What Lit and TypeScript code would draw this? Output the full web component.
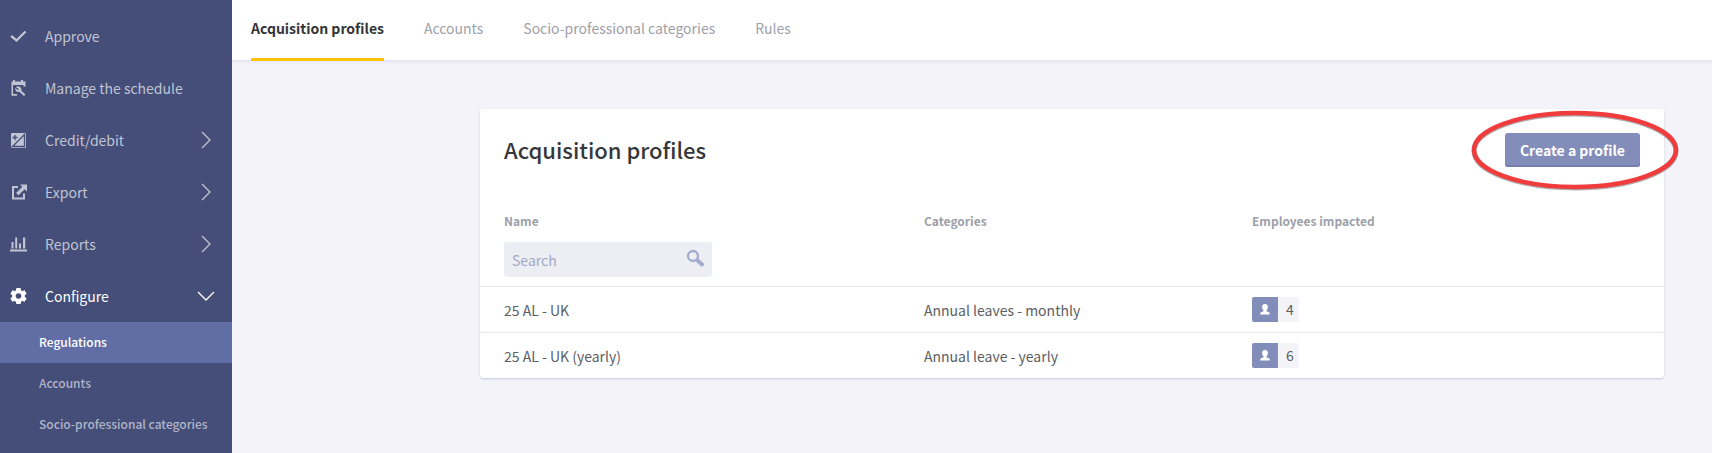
import { LitElement, html, css, svg } from "lit";
import { customElement, state } from "lit/decorators.js";
import { classMap } from "lit/directives/class-map.js";

interface NavEntry {
  label: string;
  icon: string;
  arrow?: "right" | "down";
}

interface Profile {
  name: string;
  category: string;
  employees: number;
}

const NAV: NavEntry[] = [
  { label: "Approve", icon: "check" },
  { label: "Manage the schedule", icon: "schedule" },
  { label: "Credit/debit", icon: "credit", arrow: "right" },
  { label: "Export", icon: "export", arrow: "right" },
  { label: "Reports", icon: "reports", arrow: "right" },
  { label: "Configure", icon: "gear", arrow: "down" },
];

const SUB_NAV = ["Regulations", "Accounts", "Socio-professional categories"];
const TABS = ["Acquisition profiles", "Accounts", "Socio-professional categories", "Rules"];

const PROFILES: Profile[] = [
  { name: "25 AL - UK", category: "Annual leaves - monthly", employees: 4 },
  { name: "25 AL - UK (yearly)", category: "Annual leave - yearly", employees: 6 },
];

const ICONS: Record<string, unknown> = {
  check: svg`<path d="M1.200 8L6.500 12.500L15.500 3.500" fill="none" stroke="currentColor" stroke-width="2.300"/>`,
  schedule: svg`
    <path fill="currentColor" d="M3 0h2v1.500h6V0h2v1.500h2.500V6.500h-2V5H3V14h4v1.700H1.500V1.500H3z"/>
    <path fill="currentColor" d="M5.800 7.200a3.300 3.300 0 0 1 5.400 3.400l4.300 3.900-1.600 1.600-4.200-4.200a3.300 3.300 0 0 1-4.300-3.900l2.200 2 1.300-1.200z"/>`,
  credit: svg`
    <rect x="1" y="1" width="15" height="15" rx="1" fill="currentColor"/>
    <path class="cut" d="M2.500 5.500h5M5 3v5M2.500 14.500L14.500 2.500V14.500z"/>
    <path d="M8 12.700h5" fill="none" stroke="currentColor"/>`,
  export: svg`
    <path d="M8 3H3V14.500H14V9.500" fill="none" stroke="currentColor" stroke-width="2"/>
    <path d="M10 0.500H17V7.500L14.700 5.200L8.500 11.300L6 9L12.300 2.800z" fill="currentColor"/>`,
  reports: svg`<path fill="currentColor" d="M0 13.500h17v2H0zM1.500 6h2v6.500h-2zM5.200 1.500h2v11h-2zM9 7.500h2v5h-2zM13 1.500h2.200v11h-2.200z"/>`,
  gear: svg`<path fill="currentColor" fill-rule="evenodd" d="M6.400 0h4.200l.5 2.400 1.300.7 2.200-.8 2 3.400-1.800 1.600v1.500l1.800 1.600-2 3.400-2.200-.8-1.300.7-.5 2.400H6.400l-.5-2.400-1.300-.7-2.200.8-2-3.400 1.800-1.600V7.300L.4 5.700l2-3.400 2.200.8 1.300-.7zM8.500 5.200a2.800 2.800 0 1 0 0 5.600 2.800 2.800 0 0 0 0-5.600z"/>`,
};

@customElement("app-root")
export class AppRoot extends LitElement {
  @state() private query = "";

  static styles = css`
    :host {
      display: flex;
      min-height: 100vh;
      background: #f3f3f9;
      color: #5c5e63;
      font-family: "Noto Sans CJK SC", "Open Sans", sans-serif;
      font-size: 14px;
      line-height: 20px;
    }
    * {
      box-sizing: border-box;
    }
    a {
      color: inherit;
      text-decoration: none;
    }
    ul {
      list-style: none;
      margin: 0;
      padding: 0;
    }
    .sidebar {
      position: relative;
      z-index: 1;
      flex: none;
      width: 232px;
      padding-top: 10px;
      background: #444e79;
      color: #c1c4d3;
    }
    .nav-link {
      display: flex;
      align-items: center;
      height: 52px;
      padding: 0 17px 0 10px;
    }
    .nav-link.open {
      color: #fff;
    }
    .nav-icon {
      flex: none;
      width: 17px;
      height: 16px;
      margin-right: 18px;
    }
    .cut {
      fill: none;
      stroke: #444e79;
      stroke-width: 1.300;
    }
    .nav-label {
      flex: 1;
    }
    .chevron {
      width: 18px;
      height: 18px;
      fill: none;
      stroke: currentColor;
      stroke-width: 1.300;
    }
    .sub-link {
      display: flex;
      align-items: center;
      height: 41px;
      padding: 0 0 1px 39px;
      color: #b0b4c8;
      font-size: 12px;
      font-weight: 500;
    }
    .sub-link.current {
      background: #616ea6;
      color: #fff;
    }
    .page {
      flex: 1;
      min-width: 0;
    }
    .tabs {
      display: flex;
      gap: 40px;
      height: 60px;
      padding: 0 19px;
      background: #fff;
      box-shadow: 0 1px 0 #e2e4f0, 0 2px 3px #e2e4f0;
    }
    .tab {
      height: 61px;
      padding-top: 18px;
      color: #9d9fa9;
    }
    .tab.current {
      color: #333437;
      font-weight: 700;
      border-bottom: 3px solid #fdc300;
    }
    .content {
      padding: 49px 48px 48px 248px;
    }
    .card {
      background: #fff;
      border-radius: 3px;
      box-shadow: 0 1px 2px #c4c8e0;
    }
    .card-head {
      display: flex;
      justify-content: space-between;
      align-items: flex-start;
      padding: 24px 24px 44px;
    }
    .title {
      margin: 0;
      color: #36373b;
      font-size: 22px;
      line-height: 32px;
      font-weight: 500;
    }
    .create-wrap {
      position: relative;
    }
    .create {
      display: block;
      height: 34px;
      padding: 0 15px;
      border: 0;
      border-radius: 3px;
      background: #838db9;
      box-shadow: inset 0 -2px 0 #7680ab;
      color: #fff;
      font: inherit;
      font-weight: 700;
    }
    .highlight {
      position: absolute;
      top: -24px;
      right: -39px;
      width: 208px;
      height: 82px;
      pointer-events: none;
      overflow: visible;
    }
    .grid {
      width: 100%;
      table-layout: fixed;
      border-collapse: separate;
      border-spacing: 0;
    }
    .col-name {
      width: 37.5%;
    }
    .col-category {
      width: 27.7%;
    }
    th,
    td {
      padding: 0;
      text-align: left;
      vertical-align: middle;
    }
    th {
      color: #9d9fa9;
      font-size: 12px;
      font-weight: 700;
    }
    th:first-child,
    td:first-child {
      padding-left: 24px;
    }
    .filters td {
      padding-top: 11px;
      padding-bottom: 9px;
    }
    .row td {
      height: 46px;
      border-top: 1px solid #e7e8f2;
    }
    .search {
      display: flex;
      align-items: center;
      width: 208px;
      height: 35px;
      padding: 0 8px;
      border-radius: 3px;
      background: #edeef4;
    }
    .search-input {
      flex: 1;
      min-width: 0;
      padding: 0;
      border: 0;
      outline: 0;
      background: none;
      color: #5c5e63;
      font: inherit;
    }
    .search-input::placeholder {
      color: #a3a9c8;
      opacity: 1;
    }
    .search-icon {
      width: 18px;
      height: 18px;
      margin-bottom: 3px;
      color: #a1abcd;
    }
    .badge {
      display: flex;
      width: max-content;
      height: 25px;
      border-radius: 2px;
      overflow: hidden;
      background: #f3f3f8;
    }
    .badge-icon {
      display: flex;
      align-items: center;
      justify-content: center;
      width: 26px;
      background: #838db9;
      color: #fff;
    }
    .badge-count {
      padding: 2px 5px 0 8px;
    }
  `;

  private renderNav(item: NavEntry) {
    const open = item.arrow === "down";
    return html`
      <li>
        <a class=${classMap({ "nav-link": true, open })} href="#">
          <svg class="nav-icon" viewBox="0 0 17 16" aria-hidden="true">${ICONS[item.icon]}</svg>
          <span class="nav-label">${item.label}</span>
          ${item.arrow
            ? html`<svg class="chevron" viewBox="0 0 18 18" aria-hidden="true">
                <path d=${open ? "M1 5L9 13L17 5" : "M5 1L13 9L5 17"} />
              </svg>`
            : null}
        </a>
        ${open
          ? html`<ul>
              ${SUB_NAV.map(
                (label, i) => html`<li>
                  <a class=${classMap({ "sub-link": true, current: i === 0 })} href="#">${label}</a>
                </li>`
              )}
            </ul>`
          : null}
      </li>
    `;
  }

  private renderRow(p: Profile) {
    return html`
      <tr class="row">
        <td>${p.name}</td>
        <td>${p.category}</td>
        <td>
          <span class="badge">
            <span class="badge-icon">
              <svg width="10" height="11" viewBox="0 0 10 11" aria-hidden="true">
                <path
                  fill="currentColor"
                  d="M5 0C6.900 0 7.900 1.300 7.900 3.100C7.900 4.700 7.200 5.700 6.500 6.400V7.200L9 8.200Q9.700 8.500 9.700 9.400V10.400H.3V9.400Q.3 8.500 1 8.200L3.500 7.200V6.400C2.800 5.700 2.100 4.700 2.100 3.100C2.100 1.300 3.100 0 5 0z"
                />
              </svg>
            </span>
            <span class="badge-count">${p.employees}</span>
          </span>
        </td>
      </tr>
    `;
  }

  render() {
    const q = this.query.toLowerCase();
    const rows = PROFILES.filter((p) => p.name.toLowerCase().includes(q));
    return html`
      <nav class="sidebar">
        <ul>
          ${NAV.map((item) => this.renderNav(item))}
        </ul>
      </nav>
      <div class="page">
        <nav class="tabs">
          ${TABS.map(
            (label, i) => html`<a class=${classMap({ tab: true, current: i === 0 })} href="#">${label}</a>`
          )}
        </nav>
        <main class="content">
          <section class="card">
            <header class="card-head">
              <h1 class="title">Acquisition profiles</h1>
              <div class="create-wrap">
                <button class="create" type="button">Create a profile</button>
                <svg class="highlight" viewBox="0 0 208 82" aria-hidden="true">
                  <ellipse cx="104" cy="42" rx="101" ry="37" fill="none" stroke="#77777c" stroke-opacity="0.6" stroke-width="5" />
                  <ellipse cx="104" cy="41" rx="101" ry="37" fill="none" stroke="#f03c3c" stroke-width="4.500" />
                </svg>
              </div>
            </header>
            <table class="grid">
              <colgroup>
                <col class="col-name" />
                <col class="col-category" />
                <col />
              </colgroup>
              <thead>
                <tr>
                  <th scope="col">Name</th>
                  <th scope="col">Categories</th>
                  <th scope="col">Employees impacted</th>
                </tr>
                <tr class="filters">
                  <td>
                    <label class="search">
                      <input
                        class="search-input"
                        type="text"
                        placeholder="Search"
                        aria-label="Search by name"
                        .value=${this.query}
                        @input=${(e: Event) => (this.query = (e.target as HTMLInputElement).value)}
                      />
                      <svg class="search-icon" viewBox="0 0 18 18" aria-hidden="true">
                        <circle cx="7" cy="7" r="5" fill="none" stroke="currentColor" stroke-width="2.300" />
                        <path d="M11 11L16 15.500" stroke="currentColor" stroke-width="3.800" stroke-linecap="round" />
                      </svg>
                    </label>
                  </td>
                  <td></td>
                  <td></td>
                </tr>
              </thead>
              <tbody>
                ${rows.map((p) => this.renderRow(p))}
              </tbody>
            </table>
          </section>
        </main>
      </div>
    `;
  }
}
